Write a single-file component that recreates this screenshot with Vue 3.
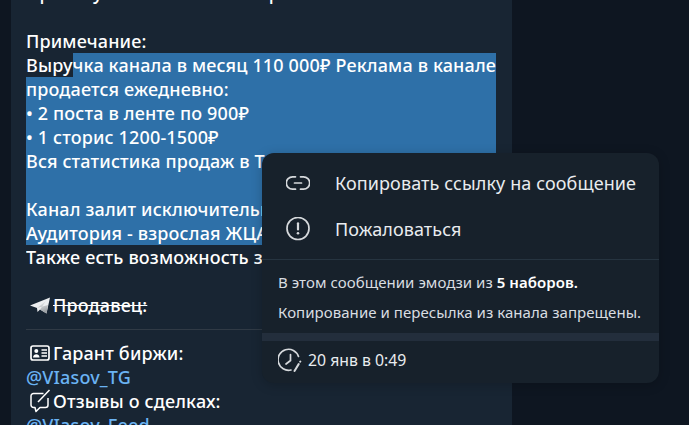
<template>
  <div class="page">
    <div class="bubble">
      <div class="line cut">Прокачу канал вместе с парой</div>
      <div class="line"></div>
      <div class="line">Примечание:</div>
      <div class="line split"><span>Выру</span><span class="sel sel-rest">чка канала в месяц 110 000₽ Реклама в канале</span></div>
      <div class="line sel">продается ежедневно:</div>
      <div class="line sel">• 2 поста в ленте по 900₽</div>
      <div class="line sel">• 1 сторис 1200-1500₽</div>
      <div class="line sel">Вся статистика продаж в Телеграм</div>
      <div class="line sel"></div>
      <div class="line sel">Канал залит исключительно рекламой</div>
      <div class="line sel">Аудитория - взрослая ЖЦА</div>
      <div class="line">Также есть возможность запуска</div>
      <div class="line"></div>
      <div class="line with-icon">
        <svg class="emoji" viewBox="0 0 20 20" width="20" height="20">
          <defs>
            <linearGradient id="plane" x1="0.3" y1="0" x2="0.7" y2="1">
              <stop offset="0" stop-color="#f2f3f4" />
              <stop offset="1" stop-color="#8f9499" />
            </linearGradient>
          </defs>
          <path d="M0 10.500 20 2.500 16.500 18.500 10 14.500 7.500 17 7 13Z" fill="#eceef0" />
          <path d="M7 13 16 6 10 14.500 16.500 18.500 18 10Z" fill="url(#plane)" />
        </svg>
        <s>Продавец:</s>
      </div>
      <div class="rule"></div>
      <div class="line with-icon">
        <svg class="emoji" viewBox="0 0 20 20" width="20" height="20" fill="none" stroke="#fff">
          <rect x="1" y="3" width="18" height="14" rx="2" stroke-width="1.700" />
          <circle cx="6.300" cy="8" r="2" fill="#fff" stroke="none" />
          <path d="M3 14.500c.3-2.300 1.600-3.200 3.300-3.200s3 .9 3.300 3.200Z" fill="#fff" stroke="none" />
          <path d="M11.500 7h5.500M11.500 10h5.500M11.500 13h5.500" stroke-width="1.400" />
        </svg>
        <span>Гарант биржи:</span>
      </div>
      <div class="line link">@VIasov_TG</div>
      <div class="line with-icon">
        <svg class="emoji" viewBox="0 0 20 20" width="20" height="20" fill="none" stroke="#fff" stroke-width="1.500">
          <path d="M13.500 2.500H3.500A2.500 2.500 0 0 0 1 5v9A2.500 2.500 0 0 0 3.500 16.500H5l1 4 4-4h5.500A2.500 2.500 0 0 0 18 14V7" stroke-linejoin="round" />
          <path d="M8 11 19.500 -1" />
        </svg>
        <span>Отзывы о сделках:</span>
      </div>
      <div class="line link">@VIasov_Feed</div>
    </div>

    <div class="menu">
      <div class="item">
        <svg class="item-icon" viewBox="0 0 24 24" fill="none" stroke="#d6d9dc" stroke-width="1.700" stroke-linecap="round">
          <path d="M9.500 5.800H6.500a6.200 6.200 0 0 0 0 12.400h3M14.500 5.800h3a6.200 6.200 0 0 1 0 12.400h-3M8.500 12h7" />
        </svg>
        <span>Копировать ссылку на сообщение</span>
      </div>
      <div class="item">
        <svg class="item-icon" viewBox="0 0 24 24" fill="none" stroke="#d6d9dc" stroke-width="1.700" stroke-linecap="round">
          <circle cx="12" cy="11.500" r="11" />
          <path d="M12 6.300v6.200" stroke-width="2.200" />
          <circle cx="12" cy="16.300" r="1.300" fill="#d6d9dc" stroke="none" />
        </svg>
        <span>Пожаловаться</span>
      </div>
      <div class="notes">
        <p>В этом сообщении эмодзи из <b>5 наборов.</b></p>
        <p>Копирование и пересылка из канала запрещены.</p>
      </div>
      <div class="gap"></div>
      <div class="date">
        <svg class="date-icon" viewBox="0 0 24 24" fill="none" stroke="#d6d9dc" stroke-width="1.700" stroke-linecap="round">
          <path d="M20.500 8.500A10.500 10.500 0 1 0 13 22" />
          <path d="M12.500 6.500v6L8 16" />
          <path d="M22.300 13.500 16.500 23" stroke-width="2" stroke-dasharray="0.100 3 8 20" />
        </svg>
        <span>20 янв в 0:49</span>
      </div>
    </div>
  </div>
</template>

<script setup>
</script>

<style>
html, body { margin: 0; background: #0e1621; }
</style>

<style scoped>
.page {
  position: relative;
  width: 689px;
  height: 425px;
  overflow: hidden;
  background: #0e1621;
  font-family: "Noto Sans", sans-serif;
  color: #fff;
}

.bubble {
  box-sizing: border-box;
  width: 501px;
  height: 460px;
  margin-left: 11px;
  margin-top: -19px;
  padding-left: 15px;
  background: #182533;
  font-size: 18px;
  font-weight: 500;
  line-height: 24px;
  letter-spacing: 0.15px;
}

.line { width: 470px; height: 24px; white-space: nowrap; overflow: hidden; }
.split { display: flex; }
.sel { background: #2e70a8; }
.sel-rest { flex: 1; }

.with-icon { display: flex; align-items: center; gap: 3px; padding-left: 4px; box-sizing: border-box; }
.emoji { flex: none; overflow: visible; }
.link { color: #6ab3f3; }
.rule { width: 470px; height: 1px; margin: 12px 0 11px; background: #303a45; }

.menu {
  position: absolute;
  left: 262px;
  top: 153px;
  width: 397px;
  height: 230px;
  border-radius: 12px;
  background: #17212b;
  box-shadow: 0 2px 12px rgba(0, 0, 0, 0.2);
  overflow: hidden;
}

.item {
  display: flex;
  align-items: center;
  gap: 25px;
  height: 46px;
  padding-left: 24px;
  font-size: 18px;
  letter-spacing: 0.1px;
  color: #e9ecef;
}

.item:first-child { margin-top: 7px; }
.item-icon { width: 24px; height: 24px; flex: none; }

.notes {
  border-top: 1px solid #263440;
  margin-top: 7px;
  padding: 7px 16px 0;
  font-size: 15px;
  letter-spacing: 0.05px;
  line-height: 30px;
  color: #d9dde1;
}

.notes p { margin: 0; height: 30px; }
.notes b { font-weight: 600; color: #fff; }

.gap { height: 8px; background: #232e3c; margin-top: 6px; }

.date {
  display: flex;
  align-items: center;
  gap: 6px;
  height: 38px;
  padding-left: 16px;
  font-size: 15.8px;
  color: #e9ecef;
}

.date-icon { width: 24px; height: 24px; flex: none; }
</style>
